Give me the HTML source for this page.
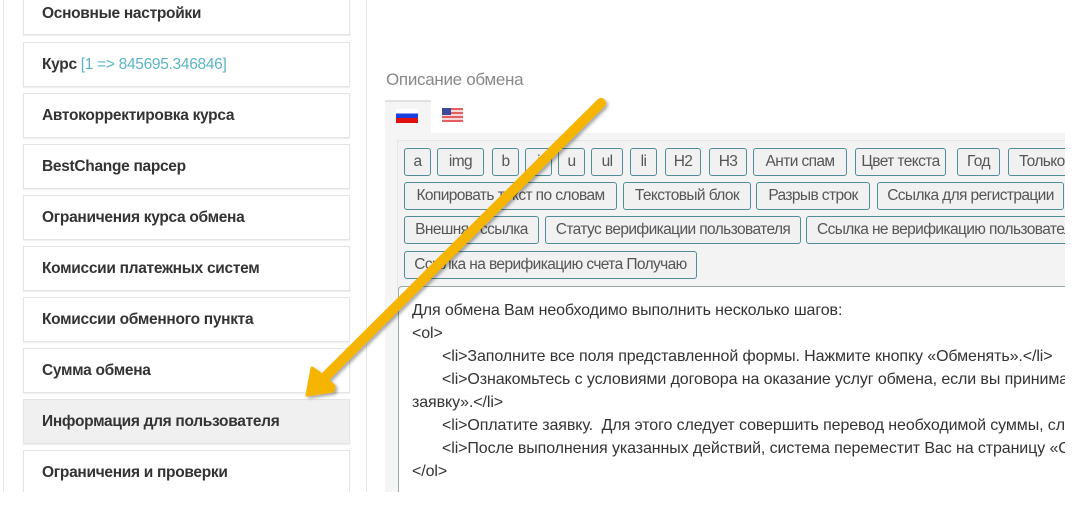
<!DOCTYPE html>
<html><head><meta charset="utf-8"><style>
*{box-sizing:border-box;margin:0;padding:0}
body{width:1088px;height:516px;background:#fff;position:relative;overflow:hidden;font-family:"Liberation Sans",sans-serif}
.clip{position:absolute;left:0;top:0;width:1088px;height:492px;overflow:hidden}
.rclip{position:absolute;left:0;top:0;width:1065px;height:492px;overflow:hidden}
.lcol{position:absolute;left:3px;top:-2px;width:364px;height:496px;border-left:1px solid #e6e6e6;border-right:1px solid #e6e6e6;background:#fff}
.it{position:absolute;left:23px;width:327px;height:45px;border:1px solid #e4e4e4;box-shadow:0 1px 1px rgba(0,0,0,.08);background:#fff;font-size:15.5px;color:#333;padding-left:18px;line-height:43px;font-weight:bold;letter-spacing:-0.3px;white-space:nowrap}
.it.act{background:#f0f0f0}
.it span{color:#5ab4c4;font-weight:normal}
.title{position:absolute;left:386px;top:70px;font-size:17px;color:#888;letter-spacing:-0.3px}
.tab{position:absolute;left:385px;top:100px;width:46px;height:34px;background:#f5f5f5;border-top:2px solid #e2e2e2}
.panel{position:absolute;left:385px;top:133px;width:700px;height:380px;background:#f5f5f5}
.tb{position:absolute;left:397px;top:140px;width:668px;height:150px;background:#f3f3f3;border-top:1px solid #e6e6e6;border-left:1px solid #e6e6e6;overflow:hidden}
.b{position:absolute;height:28px;border:1px solid #4f8d98;border-radius:3px;background:#f1f1f1;font-size:15.5px;color:#555;text-align:center;line-height:26px;white-space:nowrap;overflow:hidden;letter-spacing:-0.6px}
.ta{position:absolute;left:398px;top:286px;width:680px;height:220px;background:#fff;border:1px solid #9aa;border-right:none;border-radius:4px 0 0 0;font-size:16px;color:#333;padding:12px 0 0 13px;line-height:23px;white-space:pre;letter-spacing:-0.1px;tab-size:30px;-moz-tab-size:30px}
</style></head><body>
<div class="clip">
<div class="lcol"></div>
<div class="it" style="top:-10px;line-height:46px">Основные настройки</div>
<div class="it" style="top:42px">Курс <span>[1 =&gt; 845695.346846]</span></div>
<div class="it" style="top:93px">Автокорректировка курса</div>
<div class="it" style="top:144px">BestChange парсер</div>
<div class="it" style="top:195px">Ограничения курса обмена</div>
<div class="it" style="top:246px">Комиссии платежных систем</div>
<div class="it" style="top:297px">Комиссии обменного пункта</div>
<div class="it" style="top:348px">Сумма обмена</div>
<div class="it act" style="top:399px">Информация для пользователя</div>
<div class="it" style="top:450px">Ограничения и проверки</div>

<div class="title">Описание обмена</div>
<div class="rclip">
<div class="panel"></div>
<div class="tab"></div>
<svg style="position:absolute;left:396px;top:109px" width="22" height="14"><rect width="22" height="5" fill="#fff"/><rect y="4.5" width="22" height="5" fill="#1a3ee0"/><rect y="9" width="22" height="5" fill="#e01010"/></svg>
<svg style="position:absolute;left:442px;top:108px" width="21" height="14"><rect width="21" height="14" fill="#e46060"/><rect y="2" width="21" height="2" fill="#f4d8d8"/><rect y="6" width="21" height="2" fill="#f4d8d8"/><rect y="10" width="21" height="2" fill="#f4d8d8"/><rect width="9" height="7" fill="#3a4a9a"/></svg>

<div class="tb">
<div class="b" style="left:6px;top:7px;width:27px">a</div>
<div class="b" style="left:39px;top:7px;width:47px">img</div>
<div class="b" style="left:94px;top:7px;width:27px">b</div>
<div class="b" style="left:127px;top:7px;width:27px">i</div>
<div class="b" style="left:160px;top:7px;width:27px">u</div>
<div class="b" style="left:193px;top:7px;width:32px">ul</div>
<div class="b" style="left:232px;top:7px;width:27px">li</div>
<div class="b" style="left:267px;top:7px;width:36px">H2</div>
<div class="b" style="left:311px;top:7px;width:38px">H3</div>
<div class="b" style="left:355px;top:7px;width:94px">Анти спам</div>
<div class="b" style="left:457px;top:7px;width:91px">Цвет текста</div>
<div class="b" style="left:559px;top:7px;width:43px">Год</div>
<div class="b" style="left:610px;top:7px;width:80px;text-align:left;padding-left:10px">Только</div>
<div class="b" style="left:6px;top:41px;width:213px">Копировать текст по словам</div>
<div class="b" style="left:225px;top:41px;width:128px">Текстовый блок</div>
<div class="b" style="left:358px;top:41px;width:114px">Разрыв строк</div>
<div class="b" style="left:479px;top:41px;width:187px">Ссылка для регистрации</div>
<div class="b" style="left:6px;top:75px;width:135px">Внешняя ссылка</div>
<div class="b" style="left:147px;top:75px;width:256px">Статус верификации пользователя</div>
<div class="b" style="left:408px;top:75px;width:280px;text-align:left;padding-left:10px">Ссылка не верификацию пользователя</div>
<div class="b" style="left:6px;top:110px;width:293px">Ссылка на верификацию счета Получаю</div>
</div>

<div class="ta">Для обмена Вам необходимо выполнить несколько шагов:
&lt;ol&gt;
	&lt;li&gt;Заполните все поля представленной формы. Нажмите кнопку «Обменять».&lt;/li&gt;
	&lt;li&gt;Ознакомьтесь с условиями договора на оказание услуг обмена, если вы принимаете
заявку».&lt;/li&gt;
	&lt;li&gt;Оплатите заявку.  Для этого следует совершить перевод необходимой суммы, следуя
	&lt;li&gt;После выполнения указанных действий, система переместит Вас на страницу «Состояние
&lt;/ol&gt;</div>
</div>
</div>

<svg style="position:absolute;left:0;top:0" width="1088" height="516">
<defs><filter id="s"><feDropShadow dx="2" dy="2" stdDeviation="1.5" flood-color="#000" flood-opacity="0.35"/></filter></defs>
<g filter="url(#s)">
<line x1="601" y1="103" x2="322" y2="380" stroke="#f4b400" stroke-width="10" stroke-linecap="round"/>
<polygon points="307,395 312,368 322,375 334,386 333,391" fill="#f4b400" stroke="#f4b400" stroke-width="3" stroke-linejoin="round"/>
</g>
</svg>
</body></html>
